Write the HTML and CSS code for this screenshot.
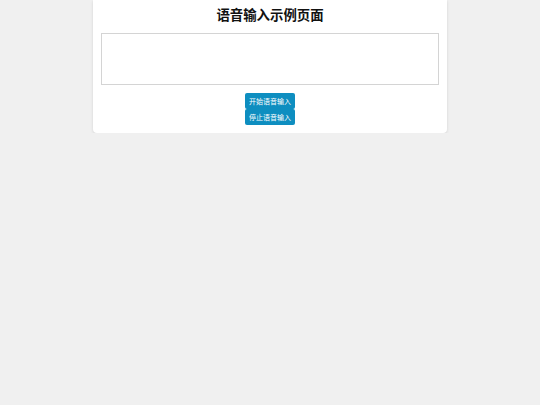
FILE: index.html
```html
<!DOCTYPE html>
<html lang="zh-CN">
<head>
    <meta charset="UTF-8">
    <meta name="viewport" content="width=device-width, initial-scale=1.0">
    <title>语音输入示例页面</title>
    <link rel="stylesheet" href="styles.css">
</head>
<body>
    <div class="container">
        <h1>语音输入示例页面</h1>
        <textarea id="result" class="result"></textarea>
        <div class="controls">
            <button id="startBtn" class="voice-btn">开始语音输入</button>
            <button id="stopBtn" class="voice-btn">停止语音输入</button>
        </div>
    </div>
</body>
</html>
```

FILE: styles.css
```css
body {
    font-family: "Liberation Sans", "Noto Sans CJK SC", sans-serif;
    margin: 0;
    background-color: #f0f0f0;
}
.container {
    width: 354px;
    box-sizing: border-box;
    margin: 0 auto;
    padding: 6px 8px 8px;
    background-color: white;
    border-radius: 0 0 4px 4px;
    box-shadow: 0 1px 3px rgba(0, 0, 0, 0.12);
}
h1 {
    margin: 0 0 7px;
    font-size: 13.4px;
    line-height: 20px;
    text-align: center;
    color: #111;
}
.result {
    display: block;
    width: 100%;
    height: 52px;
    box-sizing: border-box;
    margin: 0;
    border: 1px solid #d4d4d4;
    resize: none;
}
.controls {
    display: flex;
    flex-direction: column;
    align-items: center;
    margin-top: 8px;
}
.voice-btn {
    height: 16px;
    padding: 0 4px;
    font-family: "Liberation Sans", "Noto Sans CJK SC", sans-serif;
    font-size: 7px;
    color: white;
    background-color: #0e8ec0;
    border: none;
    border-radius: 2px;
    cursor: pointer;
}
```
